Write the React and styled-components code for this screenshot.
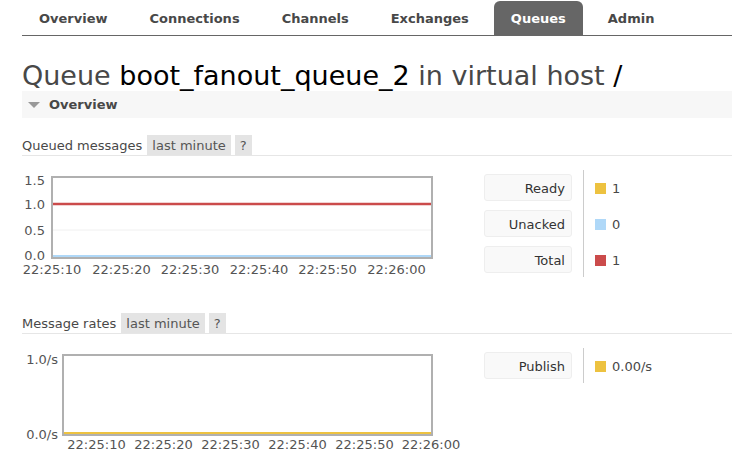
import React from 'react'
import styled, { createGlobalStyle } from 'styled-components'

const GlobalStyle = createGlobalStyle`
  body {
    margin: 0;
    background: #fff;
    font-family: 'DejaVu Sans', Verdana, sans-serif;
    font-size: 13px;
    color: #484848;
  }
`

const Page = styled.div`
  width: 732px;
  height: 452px;
  overflow: hidden;
`

const Nav = styled.ul`
  display: flex;
  margin: 0 0 0 22px;
  padding: 0;
  height: 35px;
  list-style: none;
  border-bottom: 1px solid #666;
  box-sizing: content-box;
`

const Tab = styled.li`
  margin: 1px 8px 0 0;
  padding: 0 17px;
  height: 34px;
  line-height: 36px;
  font-weight: bold;
  border-radius: 6px 6px 0 0;
  background: ${(p) => (p.active ? '#666' : 'transparent')};
  color: ${(p) => (p.active ? '#fff' : '#484848')};
`

const Content = styled.div`
  padding-left: 22px;
`

const Title = styled.h1`
  margin: 25px 0 0;
  font-size: 27px;
  font-weight: normal;
  line-height: 30px;
  color: #484848;
  white-space: nowrap;
`

const Name = styled.span`
  color: #000;
`

const SectionBar = styled.div`
  display: flex;
  align-items: center;
  gap: 9px;
  height: 27px;
  padding-left: 6px;
  background: #f7f7f7;
`

const Triangle = styled.span`
  width: 0;
  height: 0;
  border-left: 6px solid transparent;
  border-right: 6px solid transparent;
  border-top: 6px solid #999;
`

const SectionTitle = styled.span`
  font-weight: bold;
  color: #484848;
`

const ChartHeading = styled.div`
  display: flex;
  align-items: center;
  gap: 4px;
  height: 20px;
  margin-top: ${(p) => p.top}px;
  border-bottom: 1px solid #e6e6e6;
`

const HeadingLabel = styled.span`
  margin-right: 1px;
  color: #484848;
`

const Chip = styled.span`
  height: 20px;
  line-height: 21px;
  padding: 0 5px;
  background: #e4e4e4;
  color: #555;
`

const ChartRow = styled.div`
  display: flex;
  align-items: flex-start;
  margin-top: ${(p) => p.top}px;
`

const Plot = styled.svg`
  display: block;
  flex: none;
  margin-right: 22px;
  font-family: 'DejaVu Sans', Verdana, sans-serif;
  font-size: 13px;
`

const Legend = styled.div`
  display: flex;
`

const LegendLabels = styled.div`
  display: flex;
  flex-direction: column;
  gap: 9px;
  padding: 4px 11px 4px 0;
`

const LegendLabel = styled.div`
  width: 88px;
  height: 27px;
  box-sizing: border-box;
  padding-right: 6px;
  line-height: 27px;
  text-align: right;
  background: #f9f9f9;
  border: 1px solid #eee;
  border-radius: 3px;
  color: #333;
`

const LegendValues = styled.div`
  display: flex;
  flex-direction: column;
  gap: 9px;
  padding: 4px 0 4px 11px;
  border-left: 1px solid #ccc;
`

const LegendValue = styled.div`
  display: flex;
  align-items: center;
  gap: 6px;
  height: 27px;
  padding-top: 2px;
  box-sizing: border-box;
  color: #484848;
`

const Swatch = styled.span`
  width: 11px;
  height: 11px;
  background: ${(p) => p.color};
`

const Chart = ({ width, height, box, yLabels, yLabelX, xLabels, xBaseline, gridY, lines }) => (
  <Plot width={width} height={height} viewBox={`0 0 ${width} ${height}`}>
    {gridY && (
      <line x1={box.x} x2={box.x + box.w} y1={gridY} y2={gridY} stroke="#f0f0f0" strokeWidth="1" />
    )}
    {lines.map((l, i) => (
      <line
        key={i}
        x1={box.x + 1}
        x2={box.x + box.w - 1}
        y1={l.y}
        y2={l.y}
        stroke={l.color}
        strokeWidth={l.width}
      />
    ))}
    <rect x={box.x} y={box.y} width={box.w} height={box.h} fill="none" stroke="#b0b0b0" strokeWidth="2" />
    {yLabels.map((l) => (
      <text key={l.text} x={yLabelX} y={l.y} textAnchor="end" fill="#545454">
        {l.text}
      </text>
    ))}
    {xLabels.map((x, i) => (
      <text key={i} x={x} y={xBaseline} textAnchor="middle" fill="#545454">
        {`22:2${i === 5 ? '6:00' : '5:' + (i + 1) + '0'}`}
      </text>
    ))}
  </Plot>
)

const tabs = ['Overview', 'Connections', 'Channels', 'Exchanges', 'Queues', 'Admin']

const queued = [
  { label: 'Ready', color: '#edc240', value: '1' },
  { label: 'Unacked', color: '#afd8f8', value: '0' },
  { label: 'Total', color: '#cb4b4b', value: '1' },
]

const rates = [{ label: 'Publish', color: '#edc240', value: '0.00/s' }]

const ChartLegend = ({ items }) => (
  <Legend>
    <LegendLabels>
      {items.map((it) => (
        <LegendLabel key={it.label}>{it.label}</LegendLabel>
      ))}
    </LegendLabels>
    <LegendValues>
      {items.map((it) => (
        <LegendValue key={it.label}>
          <Swatch color={it.color} />
          {it.value}
        </LegendValue>
      ))}
    </LegendValues>
  </Legend>
)

const App = () => {
  return (
    <Page>
      <GlobalStyle />
      <Nav>
        {tabs.map((t) => (
          <Tab key={t} active={t === 'Queues'}>
            {t}
          </Tab>
        ))}
      </Nav>
      <Content>
        <Title>
          Queue <Name>boot_fanout_queue_2</Name> in virtual host <Name>/</Name>
        </Title>
        <SectionBar>
          <Triangle />
          <SectionTitle>Overview</SectionTitle>
        </SectionBar>

        <ChartHeading top={17}>
          <HeadingLabel>Queued messages</HeadingLabel>
          <Chip>last minute</Chip>
          <Chip>?</Chip>
        </ChartHeading>
        <ChartRow top={14}>
          <Chart
            width={440}
            height={107}
            box={{ x: 30, y: 7, w: 380, h: 81 }}
            yLabelX={23}
            yLabels={[
              { text: '1.5', y: 15 },
              { text: '1.0', y: 39 },
              { text: '0.5', y: 65 },
              { text: '0.0', y: 90 },
            ]}
            gridY={60}
            xLabels={[30, 99.5, 168, 237, 305.5, 374.5]}
            xBaseline={104}
            lines={[
              { y: 86, color: '#afd8f8', width: 2 },
              { y: 34, color: '#cb4b4b', width: 2.5 },
            ]}
          />
          <ChartLegend items={queued} />
        </ChartRow>

        <ChartHeading top={36}>
          <HeadingLabel>Message rates</HeadingLabel>
          <Chip>last minute</Chip>
          <Chip>?</Chip>
        </ChartHeading>
        <ChartRow top={14}>
          <Chart
            width={440}
            height={104}
            box={{ x: 41, y: 7, w: 369, h: 80 }}
            yLabelX={36}
            yLabels={[
              { text: '1.0/s', y: 16 },
              { text: '0.0/s', y: 91 },
            ]}
            xLabels={[74.5, 141.5, 208.5, 275.5, 342.5, 409]}
            xBaseline={101}
            lines={[{ y: 85, color: '#edc240', width: 2 }]}
          />
          <ChartLegend items={rates} />
        </ChartRow>
      </Content>
    </Page>
  )
}

export default App
